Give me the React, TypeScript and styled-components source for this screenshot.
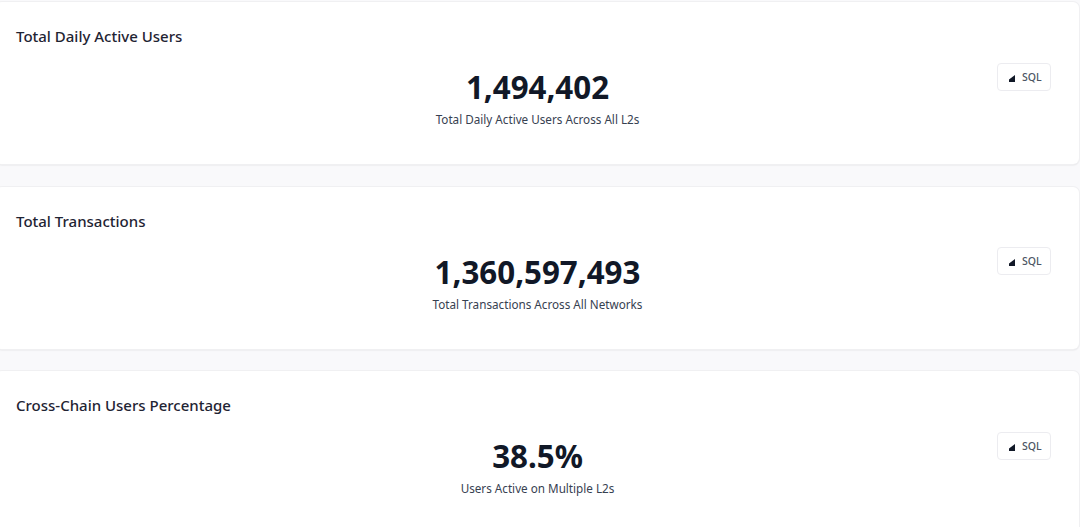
import React from "react";
import styled, { createGlobalStyle } from "styled-components";

const GlobalStyle = createGlobalStyle`
  html, body {
    margin: 0;
    padding: 0;
    height: 527px;
    overflow: hidden;
    background: #f9f9fb;
    font-family: "Noto Sans", "Open Sans", sans-serif;
  }
`;

const Page = styled.div`
  display: flex;
  flex-direction: column;
  gap: 22.6px;
  margin: 2px 0 0 -4px;
  width: 1083px;
`;

const Card = styled.section`
  box-sizing: border-box;
  height: 162px;
  flex: none;
  padding: 24px 28px 0 20px;
  background: #fff;
  border-radius: 6px;
  box-shadow: 0 0 0 1px #f0f0f2, 0 1px 2px rgba(0, 0, 0, 0.14);
`;

const Title = styled.h2`
  margin: 0;
  font-size: 15px;
  line-height: 20px;
  font-weight: 500;
  color: #1f2433;
`;

const Body = styled.div`
  display: grid;
  grid-template-columns: 1fr auto 1fr;
  margin-top: 17px;
  padding-left: 8px;
`;

const Center = styled.div`
  grid-column: 2;
  display: flex;
  flex-direction: column;
  align-items: center;
  padding-top: 3px;
`;

const Value = styled.div`
  font-size: 31.3px;
  line-height: 42px;
  font-weight: 700;
  color: #111827;
`;

const Caption = styled.div`
  margin-top: 2px;
  font-size: 11.7px;
  line-height: 18px;
  color: #374151;
`;

const SqlButton = styled.button`
  grid-column: 3;
  justify-self: end;
  align-self: start;
  display: flex;
  align-items: center;
  gap: 7px;
  box-sizing: border-box;
  width: 54px;
  height: 28px;
  margin-top: -0.5px;
  padding: 0 0 0 11px;
  background: #fff;
  border: 1px solid #ececf0;
  border-radius: 4px;
  font-family: inherit;
  font-size: 10.5px;
  font-weight: 500;
  color: #4b5563;
`;

const Caret = styled.svg`
  width: 6px;
  height: 7px;
  margin-top: 3px;
  flex: none;
`;

const metrics = [
  {
    title: "Total Daily Active Users",
    value: "1,494,402",
    caption: "Total Daily Active Users Across All L2s",
  },
  {
    title: "Total Transactions",
    value: "1,360,597,493",
    caption: "Total Transactions Across All Networks",
  },
  {
    title: "Cross-Chain Users Percentage",
    value: "38.5%",
    caption: "Users Active on Multiple L2s",
  },
];

export default function App() {
  return (
    <>
      <GlobalStyle />
      <Page>
        {metrics.map((metric) => (
          <Card key={metric.title}>
            <Title>{metric.title}</Title>
            <Body>
              <Center>
                <Value>{metric.value}</Value>
                <Caption>{metric.caption}</Caption>
              </Center>
              <SqlButton>
                <Caret viewBox="0 0 6 7" aria-hidden="true">
                  <path d="M6 0V7H0V4.5Z" fill="#111827" />
                </Caret>
                SQL
              </SqlButton>
            </Body>
          </Card>
        ))}
      </Page>
    </>
  );
}
